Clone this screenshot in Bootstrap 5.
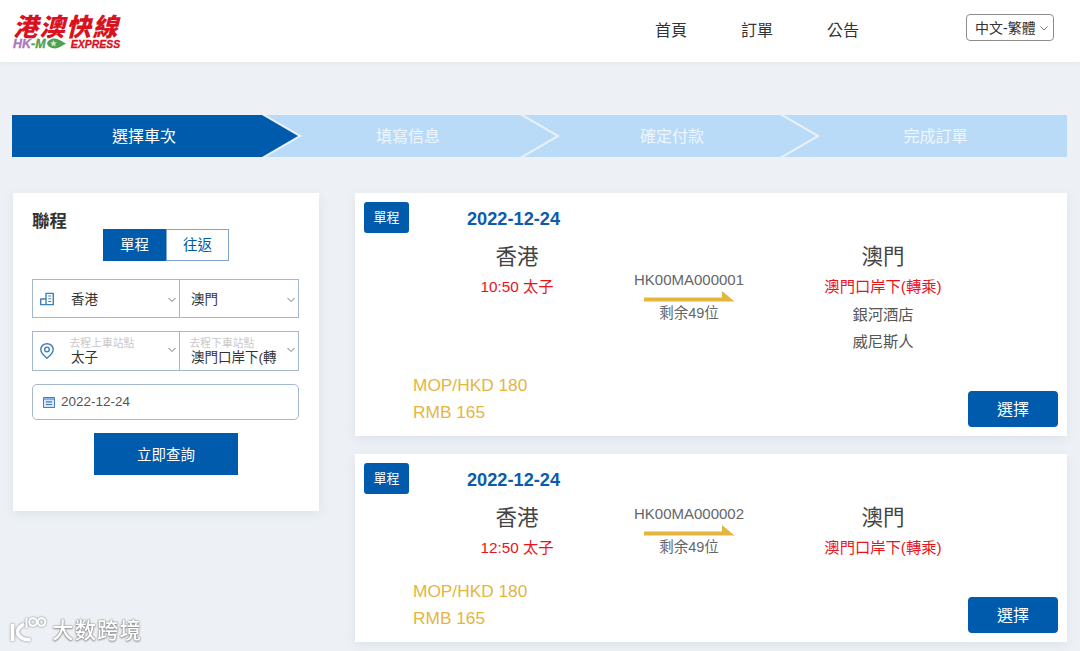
<!DOCTYPE html>
<html lang="zh-Hant">
<head>
    <meta charset="UTF-8">
    <meta name="viewport" content="width=device-width, initial-scale=1.0">
    <title>港澳快線</title>
    <link rel="stylesheet" href="https://cdn.jsdelivr.net/npm/bootstrap@5.3.0/dist/css/bootstrap.min.css">
    <style>
        :root { --hk-blue: #005bac; --hk-line: #a3b8d0; --hk-gold: #e5b53e; --hk-red: #e8141c; }
        html, body { height: 651px; overflow: hidden; }
        body { background: #edf1f5; color: #333; font-family: "Liberation Sans", "Noto Sans CJK TC", sans-serif; }

        /* header */
        .top-bar { height: 62px; background: #fff; padding: 0 26px 0 13px; box-shadow: 0 1px 4px rgba(40, 70, 110, .06); }
        .logo-cn { font: italic 900 25px/25px "Noto Sans CJK TC", sans-serif; color: #d8131f; letter-spacing: 1.500px; white-space: nowrap; }
        .logo-en { font: italic 700 10.500px/12px "Liberation Sans", sans-serif; color: #d8131f; white-space: nowrap; -webkit-text-stroke: .3px; display: flex; align-items: center; }
        .logo-hk { color: #a877c0; font-size: 12.500px; }
        .logo-m { color: #4ca24f; }
        .top-nav { gap: 54px; margin-right: 107px; }
        .top-nav .nav-link { padding: 0; color: #333; font-size: 16px; line-height: 24px; }
        .lang-select { width: 88px; height: 27px; margin-bottom: 7px; font-size: 14px; line-height: 18px; color: #333; padding: 3px 18px 3px 8px; border-color: #8d8d8d; border-radius: 4px; background-size: 10px 8px; background-position: right 4px center; background-image: url("data:image/svg+xml,%3csvg xmlns='http://www.w3.org/2000/svg' viewBox='0 0 10 8'%3e%3cpath fill='none' stroke='%23777' d='M1.500 2.500 5 6l3.500-3.500'/%3e%3c/svg%3e"); }

        /* steps: widths follow the chevron positions, padding re-centres the labels */
        .step-bar { margin: 53px 13px 0 12px; height: 42px; }
        .step-item { flex: none; position: relative; background: #badbf7; color: #eef6fd; font-size: 16px; line-height: 44px; text-align: center; }
        .step-item.is-active { background: var(--hk-blue); color: #fff; width: 250px; padding-left: 14px; }
        .step-two { width: 258px; padding-left: 34px; }
        .step-three { width: 260px; padding-left: 44px; }
        .step-four { width: 287px; padding-left: 24px; }
        .step-item:not(:last-child)::after, .step-item:not(:last-child)::before { content: ""; position: absolute; top: 0; bottom: 0; left: 100%; }
        .step-item:not(:last-child)::after { width: 40px; background: #e9f1f9; z-index: 1; clip-path: polygon(0 0, 4px 0, 100% 50%, 4px 100%, 0 100%); }
        .step-item:not(:last-child)::before { width: 36px; background: inherit; z-index: 2; clip-path: polygon(0 0, 100% 50%, 0 100%); }

        /* search panel */
        .main-area { margin: 36px 13px 0; gap: 36px; }
        .search-panel { width: 306px; height: 318px; flex: none; background: #fff; padding: 17px 20px 0 19px; box-shadow: 0 3px 10px rgba(50, 90, 140, .09); }
        .panel-title { font-size: 17.500px; font-weight: 700; line-height: 22px; color: #333; }
        .trip-toggle { width: 126px; margin: -3px 0 18px 71px; display: flex; }
        .trip-toggle .btn { flex: 1 1 0; padding: 0; height: 32px; border-radius: 0; font-size: 14.500px; line-height: 30px; border: 1px solid #7fa5cf; color: var(--hk-blue); background: #fff; }
        .trip-toggle .btn.is-on { background: var(--hk-blue); border-color: var(--hk-blue); color: #fff; }
        .field-row { height: 39px; border: 1px solid var(--hk-line); display: flex; margin-bottom: 13px; }
        .field-row.is-double { height: 40px; }
        .field-cell { position: relative; display: flex; align-items: center; min-width: 0; color: #333; font-size: 13.500px; white-space: nowrap; overflow: hidden; }
        .field-cell.from-cell { width: 147px; border-right: 1px solid var(--hk-line); padding-left: 38px; }
        .field-cell.to-cell { flex: 1 1 0; padding-left: 11px; }
        .field-text { padding-top: 3px; }
        .field-icon { position: absolute; left: 7px; top: 50%; transform: translateY(-50%); color: #3f7ebf; }
        .field-arrow { position: absolute; right: 2px; top: 16px; width: 10px; height: 8px; color: #777; }
        .is-double .field-arrow { top: 14px; }
        .field-label { font-size: 10.800px; line-height: 12px; color: #c9c9c9; margin-left: -1.500px; }
        .field-value { line-height: 17px; }
        .date-field { height: 36px; border: 1px solid var(--hk-line); border-radius: 5px; padding-left: 10px; gap: 6px; font-size: 13.500px; color: #555; margin-top: 13px; }
        .query-btn { width: 144px; height: 42px; margin: 13px 0 0 62px; padding-top: 9px; background: var(--hk-blue); border: 0; border-radius: 0; color: #fff; font-size: 14.500px; }

        /* trip cards */
        .trip-list { flex: 1 1 0; gap: 18px; }
        .trip-card { border: 0; border-radius: 0; padding: 9px; box-shadow: 0 3px 10px rgba(50, 90, 140, .09); }
        .trip-head { height: 31px; margin-bottom: 8px; }
        .trip-badge { width: 45px; height: 31px; background: var(--hk-blue); border-radius: 3px; color: #fff; font-size: 13px; line-height: 31px; text-align: center; }
        .trip-date { margin-left: 58px; font-size: 18.200px; font-weight: 700; color: #0b5cab; line-height: 34px; }
        .trip-grid { display: grid; grid-template-columns: 184px 160px 228px; margin-left: 61px; align-items: start; text-align: center; }
        .route-box { align-self: center; margin-bottom: 2px; }
        .stop-name { font-size: 21.500px; line-height: 32px; color: #444; }
        .stop-line { font-size: 15.300px; line-height: 27.500px; color: #555; }
        .stop-line.is-red { color: var(--hk-red); }
        .route-code { font-size: 15px; line-height: 18px; color: #666; }
        .route-left { font-size: 14.500px; line-height: 20px; color: #666; margin-top: 1px; }
        .route-arrow { display: block; margin: 2px auto 0; }
        .trip-foot { margin-top: 16.500px; padding-left: 49px; }
        .price-box { padding-bottom: 1px; }
        .price-line { font-size: 17.300px; line-height: 27px; color: var(--hk-gold); }
        .pick-btn { width: 90px; height: 36px; padding: 2px 0 0; background: var(--hk-blue); border: 0; border-radius: 4px; color: #fff; font-size: 16px; }

        /* watermark */
        .wm-mark { position: fixed; left: 9px; bottom: 8px; display: flex; align-items: center; gap: 5px; color: #fff; font: 500 21.500px/26px "Noto Sans CJK SC", sans-serif; text-shadow: 0 0 2px #7d7d7d, 0 0 1px #7d7d7d, 0 1px 2px #9a9a9a; letter-spacing: 1px; z-index: 5; }
        .wm-mark svg { filter: drop-shadow(0 0 1px #7d7d7d); }
    </style>
</head>
<body>
    <!-- 頂部導航 -->
    <header class="top-bar d-flex align-items-center justify-content-between">
        <div class="d-flex flex-column">
            <div class="logo-cn">港澳快線</div>
            <div class="logo-en">
                <span class="logo-hk">HK<span class="logo-m">-M</span></span>
                <svg width="21" height="11" viewBox="0 0 21 11">
                    <path d="M1 5.500C2 1.500 8-.5 12 1.200c3 1 5 3 8 4.300-3 1.500-5 3.300-8 4.300C8 11.500 2 9.500 1 5.500z" fill="#4ca24f"/>
                    <path d="M7.500 2l1 2.300 2.400.2-1.800 1.600.6 2.400-2.200-1.300-2.100 1.300.5-2.400-1.800-1.600 2.400-.2z" fill="#cfe8c4"/>
                </svg>
                <span class="ms-1">EXPRESS</span>
            </div>
        </div>
        <div class="d-flex align-items-center">
            <ul class="nav top-nav">
                <li class="nav-item"><a class="nav-link" href="#">首頁</a></li>
                <li class="nav-item"><a class="nav-link" href="#">訂單</a></li>
                <li class="nav-item"><a class="nav-link" href="#">公告</a></li>
            </ul>
            <select class="form-select lang-select">
                <option>中文-繁體</option>
            </select>
        </div>
    </header>

    <!-- 步驟條 -->
    <div class="step-bar d-flex">
        <div class="step-item is-active">選擇車次</div>
        <div class="step-item step-two">填寫信息</div>
        <div class="step-item step-three">確定付款</div>
        <div class="step-item step-four">完成訂單</div>
    </div>

    <div class="main-area d-flex align-items-start">
        <!-- 查詢 -->
        <aside class="search-panel">
            <div class="panel-title">聯程</div>
            <div class="trip-toggle">
                <button type="button" class="btn is-on">單程</button>
                <button type="button" class="btn">往返</button>
            </div>
            <div class="field-row">
                <div class="field-cell from-cell">
                    <svg class="field-icon" width="14" height="13" viewBox="0 0 14 13" fill="none" stroke="currentColor" stroke-width="1.400" stroke-linejoin="round">
                        <path d="M.7 6.500h5.300v5.800H.7zM6 .7h7.300v11.600H6z"/>
                        <path d="M8.200 3.500h3M8.200 6.200h3M8.200 9h3" stroke-width="1.100"/>
                    </svg>
                    <span class="field-text">香港</span>
                    <svg class="field-arrow" viewBox="0 0 10 8"><path fill="none" stroke="currentColor" d="M1.500 2 5 5.500 8.500 2"/></svg>
                </div>
                <div class="field-cell to-cell">
                    <span class="field-text">澳門</span>
                    <svg class="field-arrow" viewBox="0 0 10 8"><path fill="none" stroke="currentColor" d="M1.500 2 5 5.500 8.500 2"/></svg>
                </div>
            </div>
            <div class="field-row is-double">
                <div class="field-cell from-cell">
                    <svg class="field-icon" width="14" height="16" viewBox="0 0 14 16" fill="none" stroke="currentColor" stroke-width="1.400">
                        <path d="M7 15.200C3.500 12.300.8 9.500.8 6.400a6.200 5.700 0 0 1 12.400 0c0 3.100-2.700 5.900-6.200 8.800z"/>
                        <circle cx="7" cy="6.400" r="2.300"/>
                    </svg>
                    <div>
                        <div class="field-label">去程上車站點</div>
                        <div class="field-value">太子</div>
                    </div>
                    <svg class="field-arrow" viewBox="0 0 10 8"><path fill="none" stroke="currentColor" d="M1.500 2 5 5.500 8.500 2"/></svg>
                </div>
                <div class="field-cell to-cell">
                    <div>
                        <div class="field-label">去程下車站點</div>
                        <div class="field-value">澳門口岸下(轉</div>
                    </div>
                    <svg class="field-arrow" viewBox="0 0 10 8"><path fill="none" stroke="currentColor" d="M1.500 2 5 5.500 8.500 2"/></svg>
                </div>
            </div>
            <div class="date-field d-flex align-items-center">
                <svg width="12" height="12" viewBox="0 0 12 12" fill="#d7e5f4" stroke="#3f7ebf">
                    <path d="M.5 1.500h11v10H.5z"/>
                    <path d="M.5 3h11M3 5.800h6M3 8.500h6" fill="none" stroke-width="1.200"/>
                </svg>
                2022-12-24
            </div>
            <button type="button" class="btn query-btn">立即查詢</button>
        </aside>

        <!-- 車次 -->
        <section class="trip-list d-flex flex-column">
            <div class="card trip-card">
                <div class="trip-head d-flex align-items-start">
                    <div class="trip-badge">單程</div>
                    <div class="trip-date">2022-12-24</div>
                </div>
                <div class="trip-grid">
                    <div>
                        <div class="stop-name">香港</div>
                        <div class="stop-line is-red">10:50 太子</div>
                    </div>
                    <div class="route-box">
                        <div class="route-code">HK00MA000001</div>
                        <svg class="route-arrow" width="91" height="11" viewBox="0 0 91 11"><path d="M0 6.500h78V0l12.500 10.500H0z" fill="#e5b53e"/></svg>
                        <div class="route-left">剩余49位</div>
                    </div>
                    <div>
                        <div class="stop-name">澳門</div>
                        <div class="stop-line is-red">澳門口岸下(轉乘)</div>
                        <div class="stop-line">銀河酒店</div>
                        <div class="stop-line">威尼斯人</div>
                    </div>
                </div>
                <div class="trip-foot d-flex justify-content-between align-items-end">
                    <div class="price-box">
                        <div class="price-line">MOP/HKD 180</div>
                        <div class="price-line">RMB 165</div>
                    </div>
                    <button type="button" class="btn pick-btn">選擇</button>
                </div>
            </div>
            <div class="card trip-card">
                <div class="trip-head d-flex align-items-start">
                    <div class="trip-badge">單程</div>
                    <div class="trip-date">2022-12-24</div>
                </div>
                <div class="trip-grid">
                    <div>
                        <div class="stop-name">香港</div>
                        <div class="stop-line is-red">12:50 太子</div>
                    </div>
                    <div class="route-box">
                        <div class="route-code">HK00MA000002</div>
                        <svg class="route-arrow" width="91" height="11" viewBox="0 0 91 11"><path d="M0 6.500h78V0l12.500 10.500H0z" fill="#e5b53e"/></svg>
                        <div class="route-left">剩余49位</div>
                    </div>
                    <div>
                        <div class="stop-name">澳門</div>
                        <div class="stop-line is-red">澳門口岸下(轉乘)</div>
                    </div>
                </div>
                <div class="trip-foot d-flex justify-content-between align-items-end">
                    <div class="price-box">
                        <div class="price-line">MOP/HKD 180</div>
                        <div class="price-line">RMB 165</div>
                    </div>
                    <button type="button" class="btn pick-btn">選擇</button>
                </div>
            </div>
        </section>
    </div>

    <!-- 水印 -->
    <div class="wm-mark">
        <svg width="38" height="28" viewBox="0 0 38 28" fill="none" stroke="#fff" stroke-width="3">
            <path d="M3.500 9v17" stroke-width="3.500"/>
            <path d="M15 9c-4 2.500-6.500 5-6.500 7.500 0 5 6 9 13 8" stroke-width="3.500"/>
            <path d="M17.500 3v10" stroke-width="2"/>
            <circle cx="24" cy="7" r="3.800" stroke-width="2"/>
            <circle cx="32.500" cy="7" r="3.800" stroke-width="2"/>
        </svg>
        <span>大数跨境</span>
    </div>

    <script src="https://cdn.jsdelivr.net/npm/bootstrap@5.3.0/dist/js/bootstrap.bundle.min.js"></script>
</body>
</html>
